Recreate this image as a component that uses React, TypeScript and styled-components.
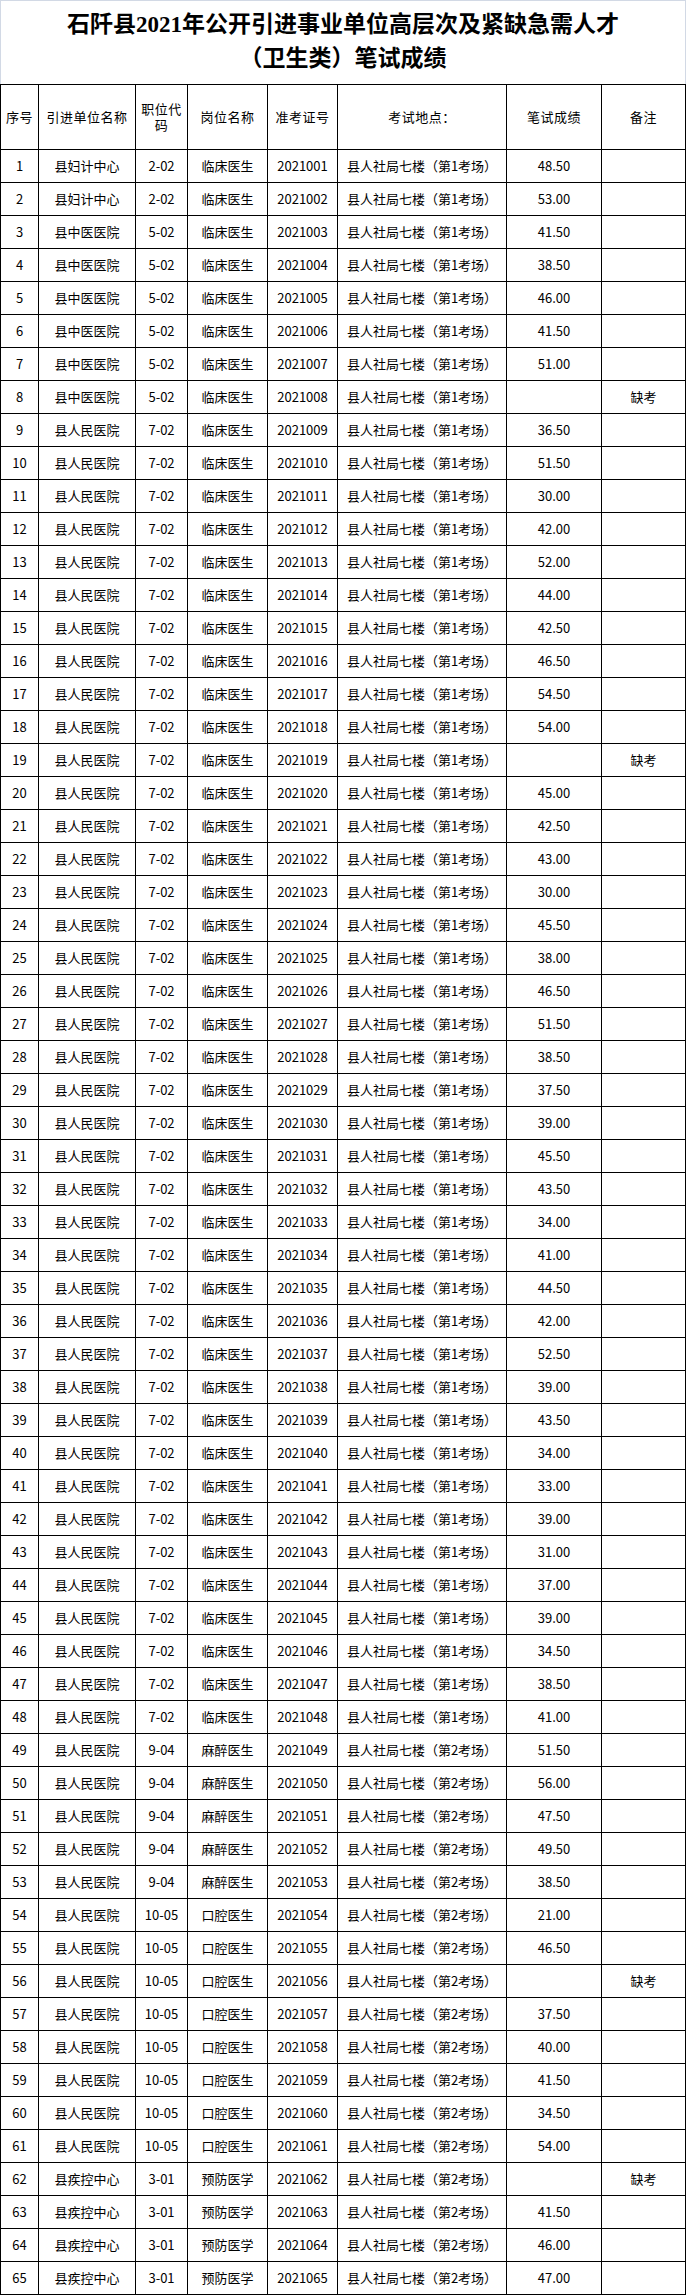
import styled, { createGlobalStyle } from "styled-components";

const GlobalStyle = createGlobalStyle`
  html, body {
    margin: 0;
    padding: 0;
    background: #ffffff;
    overflow: hidden;
  }
  body {
    font-family: "Noto Sans CJK SC", "Liberation Sans", sans-serif;
    color: #000000;
  }
`;

const COLUMNS = "37px 96px 51px 79px 69px 168px 94px 83px";

type Record = {
  unit: string;
  code: string;
  post: string;
  room: number;
  score?: string;
};

const scores1: (string | undefined)[] = [
  "48.50", "53.00", "41.50", "38.50", "46.00", "41.50", "51.00", undefined,
  "36.50", "51.50", "30.00", "42.00", "52.00", "44.00", "42.50", "46.50",
  "54.50", "54.00", undefined, "45.00", "42.50", "43.00", "30.00", "45.50",
  "38.00", "46.50", "51.50", "38.50", "37.50", "39.00", "45.50", "43.50",
  "34.00", "41.00", "44.50", "42.00", "52.50", "39.00", "43.50", "34.00",
  "33.00", "39.00", "31.00", "37.00", "39.00", "34.50", "38.50", "41.00",
  "51.50", "56.00", "47.50", "49.50", "38.50", "21.00", "46.50", undefined,
  "37.50", "40.00", "41.50", "34.50", "54.00", undefined, "41.50", "46.00",
  "47.00",
];

const records: Record[] = scores1.map((score, i) => {
  const n = i + 1;
  if (n <= 2) return { unit: "县妇计中心", code: "2-02", post: "临床医生", room: 1, score };
  if (n <= 8) return { unit: "县中医医院", code: "5-02", post: "临床医生", room: 1, score };
  if (n <= 48) return { unit: "县人民医院", code: "7-02", post: "临床医生", room: 1, score };
  if (n <= 53) return { unit: "县人民医院", code: "9-04", post: "麻醉医生", room: 2, score };
  if (n <= 61) return { unit: "县人民医院", code: "10-05", post: "口腔医生", room: 2, score };
  return { unit: "县疾控中心", code: "3-01", post: "预防医学", room: 2, score };
});

const headers = ["序号", "引进单位名称", "职位代码", "岗位名称", "准考证号", "考试地点：", "笔试成绩", "备注"];

const App = () => {
  return (
    <Page>
      <GlobalStyle />
      <Title>
        <TitleLine>石阡县2021年公开引进事业单位高层次及紧缺急需人才</TitleLine>
        <TitleLine>（卫生类）笔试成绩</TitleLine>
      </Title>
      <Table>
        <HeaderRow>
          {headers.map((h) => (
            <HeadCell key={h}>{h}</HeadCell>
          ))}
        </HeaderRow>
        {records.map((r, i) => {
          const n = i + 1;
          return (
            <Row key={n}>
              <Cell>{n}</Cell>
              <Cell>{r.unit}</Cell>
              <Cell>{r.code}</Cell>
              <Cell>{r.post}</Cell>
              <Cell>{2021000 + n}</Cell>
              <Cell>县人社局七楼（第{r.room}考场）</Cell>
              <Cell>{r.score ?? ""}</Cell>
              <Cell>{r.score ? "" : "缺考"}</Cell>
            </Row>
          );
        })}
      </Table>
    </Page>
  );
};

const Page = styled.div`
  width: 686px;
`;

const Title = styled.div`
  box-sizing: border-box;
  height: 84px;
  padding-top: 7px;
  border: 1px solid #d2d9e5;
  border-bottom: none;
  text-align: center;
  font-family: "Liberation Serif", "Noto Sans CJK SC", serif;
  font-weight: 700;
  font-size: 23px;
  line-height: 34px;
`;

const TitleLine = styled.div`
  white-space: nowrap;
`;

const Table = styled.div`
  display: flex;
  flex-direction: column;
  gap: 1px;
  padding: 1px;
  background: #000000;
`;

const Row = styled.div`
  display: grid;
  grid-template-columns: ${COLUMNS};
  gap: 1px;
  height: 32px;
`;

const HeaderRow = styled(Row)`
  height: 64px;
`;

const Cell = styled.div`
  display: flex;
  align-items: center;
  justify-content: center;
  background: #ffffff;
  font-size: 13px;
  line-height: 16px;
  text-align: center;
  white-space: nowrap;
`;

const HeadCell = styled(Cell)`
  white-space: normal;
  letter-spacing: 0.5px;
  padding: 0 4px;
`;

export default App;
